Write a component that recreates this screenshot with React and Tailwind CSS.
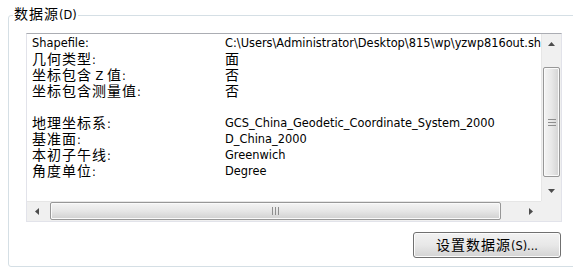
import React from "react";

const CJK = /([\u3400-\u9fff]+)/;

// CJK runs are a touch larger than the latin text in the dialog font
function Txt({ s }) {
  return s.split(CJK).map((part, i) =>
    CJK.test(part) ? (
      <span key={i} className="text-[14px] tracking-[1px] leading-[16px]">
        {part}
      </span>
    ) : (
      <React.Fragment key={i}>{part}</React.Fragment>
    )
  );
}

const rows = [
  ["Shapefile:", "C:\\Users\\Administrator\\Desktop\\815\\wp\\yzwp816out.shp"],
  ["几何类型:", "面"],
  ["坐标包含 Z 值:", "否"],
  ["坐标包含测量值:", "否"],
  ["", ""],
  ["地理坐标系:", "GCS_China_Geodetic_Coordinate_System_2000"],
  ["基准面:", "D_China_2000"],
  ["本初子午线:", "Greenwich"],
  ["角度单位:", "Degree"],
];

function Arrow({ dir }) {
  const pts = {
    up: "0,4 3.5,0 7,4",
    down: "0,0 7,0 3.5,4",
    left: "4,0 4,7 0,3.5",
    right: "0,0 0,7 4,3.5",
  }[dir];
  const vertical = dir === "up" || dir === "down";
  return (
    <svg width={vertical ? 7 : 4} height={vertical ? 4 : 7}>
      <polygon points={pts} fill="#4d4d4d" />
    </svg>
  );
}

export default function App() {
  return (
    <div className="w-[573px] h-[268px] bg-white overflow-hidden pt-[15px] pl-[8px] font-['DejaVu_Sans','Noto_Sans_CJK_SC',sans-serif] text-[11.4px] text-black">
      <div className="relative w-[570px] h-[252px] border border-[#d5dfe5] rounded-[3px]">
        <div className="absolute left-[4px] -top-[10px] bg-white px-[1px] leading-[18px]">
          <Txt s="数据源(D)" />
        </div>

        <div className="ml-[17px] mt-[17px] w-[536px] h-[189px] border border-[#e2e3ea] border-t-[#abadb3] grid grid-cols-[minmax(0,1fr)_20px] grid-rows-[minmax(0,1fr)_20px]">
          <div className="overflow-hidden pl-[5px] pt-[1px] whitespace-nowrap">
            {rows.map(([k, v], i) => (
              <div key={i} className="grid grid-cols-[193px_1fr] h-[16px] leading-[16px]">
                <div>
                  <Txt s={k} />
                </div>
                <div>
                  <Txt s={v} />
                </div>
              </div>
            ))}
          </div>

          <div className="flex flex-col bg-[#f0f0f0] border-l border-[#e6e6e6]">
            <div className="h-[20px] flex items-center justify-center">
              <Arrow dir="up" />
            </div>
            <div className="flex-1">
              <div className="mt-[13px] h-[110px] mx-[1px] rounded-[2px] border border-[#979797] bg-linear-to-r from-[#f4f4f4] via-[#e8e8e8] to-[#d3d3d3] shadow-[inset_0_0_0_1px_#fafafa] flex flex-col items-center justify-center gap-[2px]">
                <div className="w-[8px] h-px bg-[#8e8e8e]" />
                <div className="w-[8px] h-px bg-[#8e8e8e]" />
                <div className="w-[8px] h-px bg-[#8e8e8e]" />
              </div>
            </div>
            <div className="h-[20px] flex items-center justify-center">
              <Arrow dir="down" />
            </div>
          </div>

          <div className="flex bg-[#f0f0f0] border-t border-[#e6e6e6]">
            <div className="w-[20px] flex items-center justify-center">
              <Arrow dir="left" />
            </div>
            <div className="flex-1">
              <div className="ml-[3px] w-[451px] h-[18px] rounded-[2px] border border-[#979797] bg-linear-to-b from-[#f4f4f4] via-[#e6e6e6] to-[#d0d0d0] shadow-[inset_0_0_0_1px_#fafafa] flex items-center justify-center gap-[2px]">
                <div className="w-px h-[8px] bg-[#8e8e8e]" />
                <div className="w-px h-[8px] bg-[#8e8e8e]" />
                <div className="w-px h-[8px] bg-[#8e8e8e]" />
              </div>
            </div>
            <div className="w-[20px] flex items-center justify-center">
              <Arrow dir="right" />
            </div>
          </div>
          <div className="bg-[#f0f0f0]" />
        </div>

        <div className="ml-[404px] mt-[10px]">
          <button className="w-[148px] h-[26px] rounded-[3px] border border-[#707070] bg-linear-to-b from-[#f2f2f2] via-[#e8e8e8] to-[#d3d3d3] shadow-[inset_0_0_0_1px_#fcfcfc] flex items-center justify-center leading-none">
            <span>
              <Txt s="设置数据源(S)..." />
            </span>
          </button>
        </div>
      </div>
    </div>
  );
}
